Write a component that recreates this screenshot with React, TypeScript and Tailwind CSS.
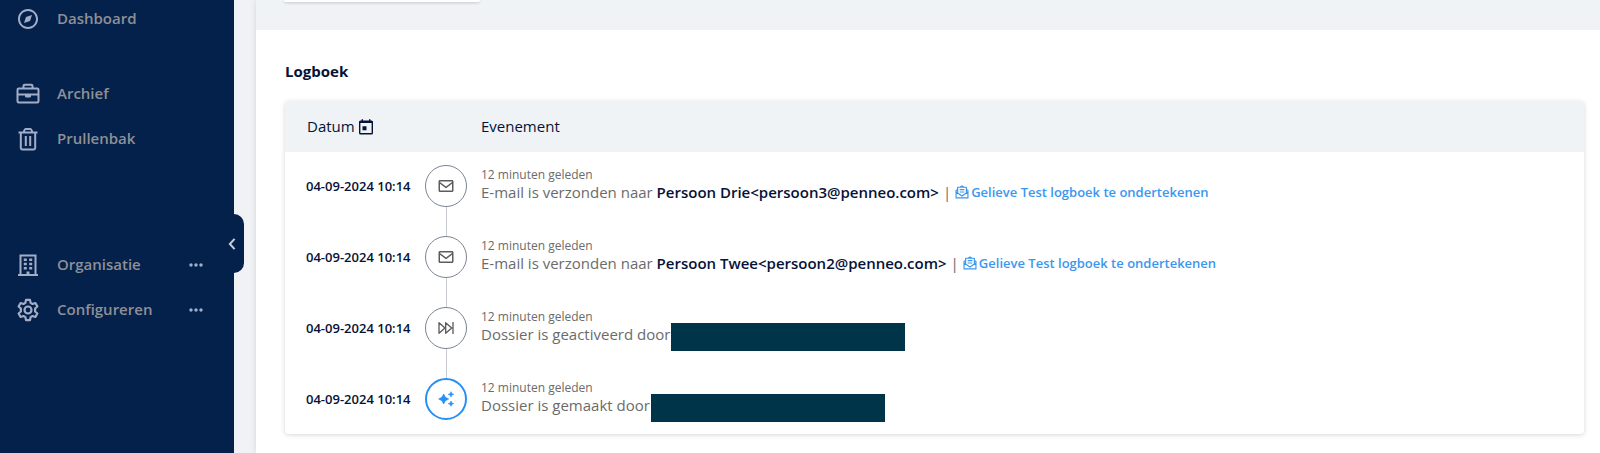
import type { ReactNode } from "react";
import {
  BiCompass,
  BiDotsHorizontalRounded,
  BiEnvelope,
} from "react-icons/bi";

function TrashIcon() {
  return (
    <svg viewBox="0 0 24 24" className="h-6 w-6" fill="none" stroke="currentColor" strokeWidth="2" strokeLinejoin="round" aria-hidden="true">
      <path d="M2.500 5.500h19M4.800 5.500V21q0 1.400 1.400 1.400h11.600q1.400 0 1.400-1.400V5.500M7.500 5.500l1-2.500q.4-1 1.300-1h4.400q.9 0 1.300 1l1 2.500M9.800 9v10M14.200 9v10" />
    </svg>
  );
}

function BriefcaseIcon() {
  return (
    <svg viewBox="0 0 24 24" className="h-6 w-6" fill="none" stroke="currentColor" strokeWidth="2" strokeLinejoin="round" aria-hidden="true">
      <rect x="1.500" y="6.500" width="21" height="14" rx="1.200" />
      <path d="M7.500 6.500V4q0-1.200 1.200-1.200h6.600q1.200 0 1.200 1.200v2.500M1.500 12.500h21" />
      <path d="M9 12.500h6v1.700q0 1.400-1.400 1.400h-3.200Q9 15.600 9 14.200z" fill="currentColor" stroke="none" />
    </svg>
  );
}

function BuildingIcon() {
  return (
    <svg viewBox="0 0 24 24" className="h-6 w-6" fill="none" stroke="currentColor" strokeWidth="2" aria-hidden="true">
      <path d="M4.500 22V2.500h15V22M2 22h20" />
      <path d="M7.800 6.800h3M13.200 6.800h3M7.800 11h3M13.200 11h3M7.800 15.200h3M13.200 15.200h3" strokeWidth="2.600" />
      <path d="M12 18.500V22" strokeWidth="3" />
    </svg>
  );
}

function GearIcon() {
  return (
    <svg viewBox="0 0 24 24" className="h-6 w-6" fill="none" stroke="currentColor" strokeWidth="2.200" strokeLinejoin="round" aria-hidden="true">
      <circle cx="12" cy="12" r="3.500" />
      <path d="M10 1.900h4l.6 3 1.900 1.100 2.900-1 2 3.500-2.300 2v3l2.300 2-2 3.500-2.900-1-1.900 1.100-.6 3h-4l-.6-3L7.500 18l-2.900 1-2-3.500 2.300-2v-3l-2.300-2 2-3.500 2.900 1 1.900-1.100z" />
    </svg>
  );
}

function CalendarIcon() {
  return (
    <svg viewBox="0 0 18 18" className="h-[18px] w-[18px]" fill="none" stroke="currentColor" strokeWidth="1.400" strokeLinejoin="round" aria-hidden="true">
      <rect x="2.700" y="3.200" width="12.600" height="12.600" rx="0.800" />
      <path d="M2.700 4.200h12.600" strokeWidth="1.800" />
      <path d="M5.300 1.200v3M12.700 1.200v3" />
      <path d="M5.500 8.200h4v4h-4z" fill="currentColor" stroke="none" />
    </svg>
  );
}

function MailOpenIcon() {
  return (
    <svg viewBox="0 0 24 24" className="h-[14px] w-[14px]" fill="none" stroke="currentColor" strokeWidth="2" strokeLinejoin="round" aria-hidden="true">
      <path d="M4.500 7.500 1.800 9.500v12.700h20.400V9.500l-2.700-2M1.800 12l10.200 7 10.200-7M4.500 13V3.800h15V13M9 3.500l3-2 3 2M8 8h8M8 12h8" />
    </svg>
  );
}

function SkipIcon() {
  return (
    <svg viewBox="0 0 24 24" className="h-4 w-4" fill="none" stroke="currentColor" strokeWidth="2" strokeLinejoin="round" aria-hidden="true">
      <path d="M1.500 4v16l9-8zM11.500 4v16l9-8zM22.500 3v18" />
    </svg>
  );
}

function SparkleIcon() {
  return (
    <svg viewBox="0 0 24 24" className="h-4 w-4" fill="currentColor" stroke="currentColor" strokeWidth="1" strokeLinejoin="round" aria-hidden="true">
      <path d="M8.500 4.500l2.600 4.900L16 12l-4.900 2.600-2.600 4.900-2.600-4.900L1 12l4.900-2.600zM19.500 1l1.100 2.900L23.500 5l-2.900 1.100L19.500 9l-1.100-2.900L15.500 5l2.900-1.100zM19.500 15l1.100 2.900 2.900 1.100-2.900 1.100-1.100 2.900-1.100-2.900-2.900-1.100 2.900-1.100z" />
    </svg>
  );
}

interface NavItemProps {
  icon: ReactNode;
  label: string;
  more?: boolean;
}

function NavItem({ icon, label, more }: NavItemProps) {
  return (
    <li className="flex h-[45px] items-center pl-4 pr-7">
      <a href="#" className="flex flex-1 items-center gap-[17px] text-[15px] font-semibold text-[#8f9095]">
        <span className="text-[#a3aec6]">{icon}</span>
        {label}
      </a>
      {more && (
        <button type="button" aria-label={`${label} menu`} className="text-[#a3aec6]">
          <BiDotsHorizontalRounded className="h-5 w-5" />
        </button>
      )}
    </li>
  );
}

interface LogEvent {
  icon: ReactNode;
  text: string;
  person?: string;
  subject?: string;
  created?: boolean;
}

const events: LogEvent[] = [
  {
    icon: <BiEnvelope className="h-[18px] w-[18px]" />,
    text: "E-mail is verzonden naar",
    person: "Persoon Drie<persoon3@penneo.com>",
    subject: "Gelieve Test logboek te ondertekenen",
  },
  {
    icon: <BiEnvelope className="h-[18px] w-[18px]" />,
    text: "E-mail is verzonden naar",
    person: "Persoon Twee<persoon2@penneo.com>",
    subject: "Gelieve Test logboek te ondertekenen",
  },
  { icon: <SkipIcon />, text: "Dossier is geactiveerd door" },
  { icon: <SparkleIcon />, text: "Dossier is gemaakt door", created: true },
];

function LogRow({ event, last }: { event: LogEvent; last: boolean }) {
  return (
    <tr className="align-top">
      <td className="pl-[21px] text-[13px] font-semibold leading-[42px] text-[#061237]">
        04-09-2024 10:14
      </td>
      <td>
        <div className="flex flex-col items-center">
          <span
            className={
              event.created
                ? "flex h-[42px] w-[42px] items-center justify-center rounded-full border-2 border-[#2790f5] text-[#2790f5]"
                : "flex h-[42px] w-[42px] items-center justify-center rounded-full border border-[#7b8494] text-[#5c5c5c]"
            }
          >
            {event.icon}
          </span>
          {!last && <span className="h-[29px] w-px bg-[#c9ccd2]" />}
        </div>
      </td>
      <td className="text-[15px] leading-[22px] text-[#6b6b6b]">
        <div className="pt-1 text-[12px] leading-3">12 minuten geleden</div>
        {event.person ? (
          <div className="flex items-center gap-1">
            <span>
              {event.text}{" "}
              <strong className="font-semibold text-[#061237]">{event.person}</strong>
            </span>
            <span>|</span>
            <a href="#" className="flex items-center gap-0.5 text-[13px] font-semibold text-[#3a97f0]">
              <MailOpenIcon />
              {event.subject}
            </a>
          </div>
        ) : (
          <div className="flex items-start gap-px">
            <span>{event.text}</span>
            <span className="h-7 w-[234px] bg-[#003549]" />
          </div>
        )}
      </td>
    </tr>
  );
}

export default function App() {
  return (
    <div className="flex min-h-screen bg-[#f0f2f6] font-['Open_Sans',sans-serif]">
      {/* Sidebar */}
      <aside className="relative w-[234px] shrink-0 bg-[#04214c]">
        <nav className="-mt-1">
          <ul>
            <NavItem icon={<BiCompass className="h-6 w-6" />} label="Dashboard" />
          </ul>
          <ul className="mt-[30px]">
            <NavItem icon={<BriefcaseIcon />} label="Archief" />
            <NavItem icon={<TrashIcon />} label="Prullenbak" />
          </ul>
          <ul className="mt-[81px]">
            <NavItem icon={<BuildingIcon />} label="Organisatie" more />
            <NavItem icon={<GearIcon />} label="Configureren" more />
          </ul>
        </nav>
        <button
          type="button"
          aria-label="Menu inklappen"
          className="absolute -right-[10px] top-[214px] flex h-[59px] w-6 items-center justify-center rounded-r-[10px] bg-[#04214c] text-[#c5cbd8]"
        >
          <svg viewBox="0 0 8 14" className="h-3 w-2" fill="none" stroke="currentColor" strokeWidth="2.400" aria-hidden="true">
            <path d="M7 1 1.500 7 7 13" />
          </svg>
        </button>
      </aside>

      <main className="ml-[22px] flex-1 bg-white shadow-[0_0_6px_rgba(0,0,0,0.12)]">
        <div className="h-[30px] bg-[#eff3f6] pl-7">
          <div className="h-0.5 w-[196px] rounded-b-sm bg-white shadow-[0_1px_3px_rgba(0,0,0,0.2)]" />
        </div>

        {/* Log */}
        <section className="pb-[19px] pl-[29px] pr-4 pt-[30px]">
          <h2 className="text-[15px] font-bold leading-[22px] text-[#061237]">Logboek</h2>
          <div className="mt-[19px] overflow-hidden rounded-sm bg-white pb-3 shadow-[0_1px_5px_rgba(0,0,0,0.16)]">
            <table className="w-full table-fixed border-collapse text-left">
              <colgroup>
                <col className="w-[140px]" />
                <col className="w-[42px]" />
                <col />
              </colgroup>
              <thead>
                <tr className="h-[51px] bg-[#eff3f6] text-[15px] text-[#061237]">
                  <th colSpan={2} className="pl-[22px] font-medium">
                    <span className="flex items-center gap-0.5">
                      Datum
                      <CalendarIcon />
                    </span>
                  </th>
                  <th className="pl-[14px] font-medium">Evenement</th>
                </tr>
              </thead>
              <tbody className="before:block before:h-[13px] [&_td:last-child]:pl-[14px]">
                {events.map((event, i) => (
                  <LogRow key={i} event={event} last={i === events.length - 1} />
                ))}
              </tbody>
            </table>
          </div>
        </section>
      </main>
    </div>
  );
}
